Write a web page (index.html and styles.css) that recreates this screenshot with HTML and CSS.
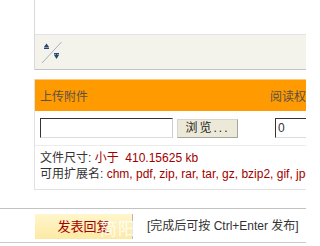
FILE: index.html
```html
<!DOCTYPE html>
<html lang="zh-CN">
<head>
<meta charset="utf-8">
<title>发表回复</title>
<link rel="stylesheet" href="styles.css">
</head>
<body>
<div class="page">
  <div class="editor">
    <div class="editor-area"></div>
    <div class="toolbar">
      <svg class="resize-icon" width="22" height="24" viewBox="0 0 22 24" aria-hidden="true">
        <line x1="1" y1="23" x2="20.5" y2="2" stroke="#a9b0bf" stroke-width="1"/>
        <polygon points="3,7 8,7 5.5,3.5" fill="#27456f"/>
        <rect x="3" y="7.5" width="5" height="1.5" fill="#27456f"/>
        <rect x="13" y="13" width="5" height="1.5" fill="#27456f"/>
        <polygon points="13,15 18,15 15.5,19" fill="#27456f"/>
        <rect x="15" y="14" width="1" height="2" fill="#27456f"/>
      </svg>
    </div>
  </div>

  <div class="attach">
    <div class="attach-head">
      <div class="col-a">上传附件</div>
      <div class="col-b head-b">阅读权限</div>
    </div>
    <div class="attach-row">
      <div class="col-a file-cell">
        <div class="file-box"></div>
        <div class="browse">浏览...</div>
      </div>
      <div class="col-b">
        <div class="perm-box">0</div>
      </div>
    </div>
    <div class="attach-info">
      <div>文件尺寸: <span class="red">小于&nbsp; 410.15625 kb</span></div>
      <div>可用扩展名: <span class="red">chm, pdf, zip, rar, tar, gz, bzip2, gif, jpg, jpeg, png</span></div>
    </div>
  </div>

  <div class="submit">
    <div class="submit-btn">发表回复</div>
    <div class="hint">[完成后可按 Ctrl+Enter 发布]</div>
    <div class="watermark">简阳</div>
  </div>
</div>
</body>
</html>
```

FILE: styles.css
```css
html, body {
  margin: 0;
  padding: 0;
  overflow: hidden;
  background: #fff;
}

body {
  font-family: "Liberation Sans", "Noto Sans CJK SC", sans-serif;
  font-size: 12px;
  color: #333;
}

.page {
  width: 306px;
  overflow: hidden;
}

.editor {
  margin-left: 34px;
  border-left: 1px solid #d9d9d9;
}

.editor-area {
  height: 34px;
  background: #fff;
}

.toolbar {
  height: 34px;
  box-sizing: content-box;
  border-top: 1px solid #e3e3e3;
  border-bottom: 1px solid #c4c4c4;
  background: #f3f3ec;
  display: flex;
  align-items: flex-start;
  padding-left: 6px;
}

.resize-icon {
  display: block;
  margin-top: 5px;
}

.attach {
  margin-top: 9px;
  margin-left: 34px;
  border-left: 1px solid #e2e2e2;
  border-bottom: 1px solid #e2e2e2;
  overflow: hidden;
}

.attach-head {
  height: 32px;
  box-sizing: border-box;
  border-top: 1px solid #fbc980;
  background: #ff9a00;
  color: #5b5247;
  display: grid;
  grid-template-columns: 230px 1fr;
  align-items: center;
  padding-left: 5px;
  white-space: nowrap;
}

.attach-row {
  height: 35px;
  box-sizing: border-box;
  border-bottom: 1px solid #ececec;
  display: grid;
  grid-template-columns: 230px 1fr;
  align-items: start;
  padding-left: 5px;
  padding-top: 7px;
}

.file-cell {
  display: flex;
  align-items: flex-start;
}

.file-box {
  width: 131px;
  height: 18px;
  border-style: solid;
  border-width: 1px;
  border-color: #333 #cfcfcf #dcdcdc #333;
  background: #fff;
}

.browse {
  margin-left: 4px;
  margin-top: 1px;
  width: 59px;
  height: 17px;
  border-style: solid;
  border-width: 1px;
  border-color: #d8d6cc #a8a69c #a8a69c #d8d6cc;
  background: #ece9d8;
  color: #222;
  font-size: 12px;
  line-height: 17px;
  text-align: center;
  letter-spacing: 2px;
}

.col-b {
  padding-left: 5px;
  overflow: hidden;
}

.head-b {
  padding-left: 0;
}

.perm-box {
  width: 120px;
  height: 18px;
  border-style: solid;
  border-width: 1px;
  border-color: #333 #cfcfcf #dcdcdc #333;
  background: #fff;
  line-height: 18px;
  padding-left: 2px;
  color: #333;
}

.attach-info {
  padding: 4px 5px 7px;
  line-height: 16px;
  color: #333;
  white-space: nowrap;
  overflow: hidden;
}

.red {
  color: #a00000;
}

.submit {
  position: relative;
  margin-top: 18px;
  height: 35px;
  border-top: 1px solid #c2c2c2;
  border-bottom: 1px solid #cacaca;
  display: flex;
  align-items: flex-start;
  padding-top: 5px;
  box-sizing: border-box;
  overflow: hidden;
}

.submit-btn {
  flex: none;
  margin-left: 35px;
  width: 97px;
  height: 25px;
  border-right: 1px solid #b8b8b8;
  background: linear-gradient(#fff6cc, #fde9a4);
  color: #a30000;
  font-size: 13px;
  line-height: 25px;
  text-align: center;
}

.hint {
  flex: none;
  margin-left: 14px;
  margin-top: 4px;
  line-height: 16px;
  color: #333;
  white-space: nowrap;
}

.watermark {
  position: absolute;
  left: 100px;
  top: 11px;
  font-size: 17px;
  line-height: 20px;
  color: rgba(255, 255, 255, 0.85);
  letter-spacing: 1px;
}
```
